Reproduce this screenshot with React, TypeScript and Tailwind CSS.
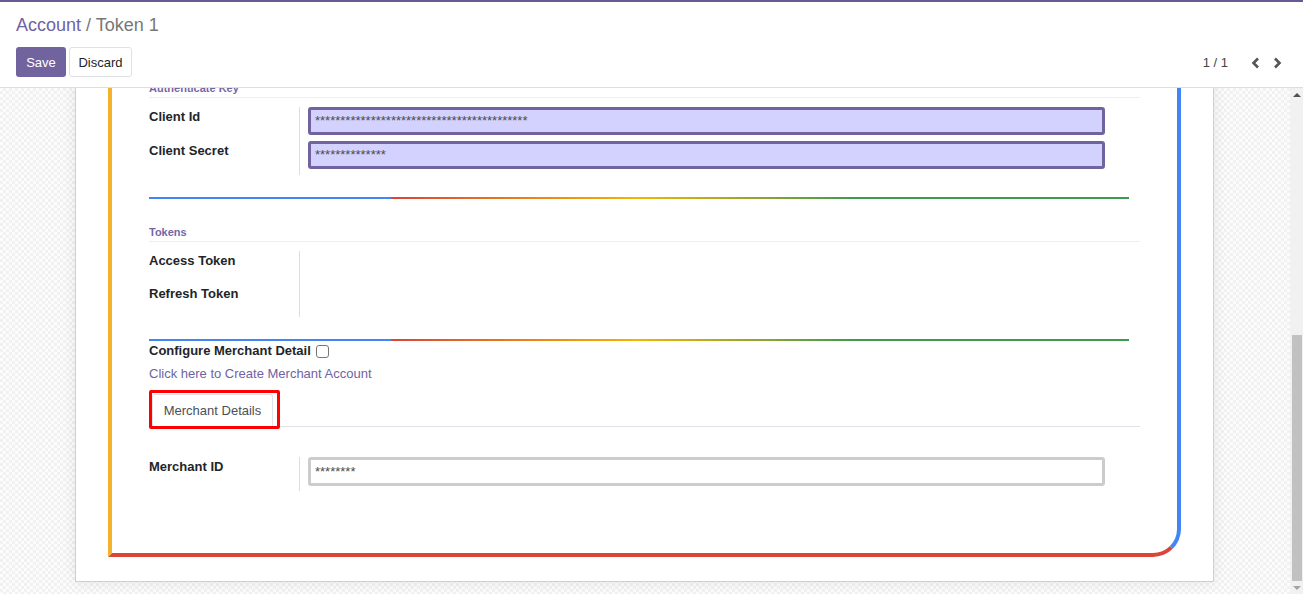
import { ReactNode } from "react";

function Chevron({ dir }: { dir: "left" | "right" }) {
  return (
    <svg width="10" height="12" viewBox="0 0 10 12" className="text-[#555]">
      <polyline
        points={dir === "left" ? "7,1.5 2.5,6 7,10.5" : "3,1.5 7.5,6 3,10.5"}
        fill="none"
        stroke="currentColor"
        strokeWidth="2.6"
      />
    </svg>
  );
}

function SeparatorTitle({ children, className = "" }: { children: ReactNode; className?: string }) {
  return (
    <div className={`h-[19px] border-b border-[#eeeeee] text-[11px] font-bold leading-[18px] text-[#7467a8] ${className}`}>
      {children}
    </div>
  );
}

function RainbowLine({ className = "" }: { className?: string }) {
  return (
    <div
      className={`h-[2px] w-[980px] bg-[image:linear-gradient(to_right,#4285f4_24.7%,#db4437_24.7%,#f4b400_50%,#3e9a4f_72%,#3e9a4f_100%)] ${className}`}
    />
  );
}

function Field({
  label,
  rowHeight,
  children,
}: {
  label: string;
  rowHeight: string;
  children?: ReactNode;
}) {
  return (
    <div className={`flex ${rowHeight}`}>
      <div className="w-[150px] shrink-0 text-[13px] font-bold leading-[19.5px] text-[#212529]">{label}</div>
      <div className="border-l border-[#dddddd] pl-2">{children}</div>
    </div>
  );
}

function SecretInput({ value }: { value: string }) {
  return (
    <div className="flex h-[28px] w-[797px] items-center rounded-[3px] border-[3px] border-[#71649e] bg-[#d3d1fd] px-1 text-[13px] text-[#4c4c4c]">
      {value}
    </div>
  );
}

export default function App() {
  return (
    <div className="flex h-[594px] w-[1303px] flex-col overflow-hidden bg-white font-['Liberation_Sans',Arial,sans-serif]">
      {/* control panel */}
      <div className="shrink-0 border-t-2 border-b border-t-[#6a5a93] border-b-[#dddddd] px-4 pb-[10px] pt-[11px]">
        <div className="h-[24px] text-[18px] leading-[24px]">
          <span className="text-[#6f62a3]">Account</span>
          <span className="text-[#777777]"> / Token 1</span>
        </div>
        <div className="mt-[10px] flex h-[30px] items-center">
          <button className="flex h-[30px] w-[50px] items-center justify-center rounded-[3px] bg-[#71639e] pt-px text-[13px] text-white">
            Save
          </button>
          <button className="ml-[3px] flex h-[30px] w-[63px] items-center justify-center rounded-[3px] border border-[#dee2e6] bg-white pt-px text-[13px] text-[#212529]">
            Discard
          </button>
          <div className="ml-auto mr-[5px] flex items-center pt-px">
            <span className="text-[13px] text-[#444444]">1 / 1</span>
            <div className="ml-[23px] flex items-center gap-[11px]">
              <Chevron dir="left" />
              <Chevron dir="right" />
            </div>
          </div>
        </div>
      </div>

      {/* body */}
      <div className="flex min-h-0 flex-1">
        <div className="min-w-0 flex-1 overflow-hidden bg-[image:repeating-conic-gradient(#f1f1f1_0_25%,#fcfcfc_0_50%)] bg-[length:6px_6px]">
          <div className="-mt-[10px] ml-[75px] w-[1139px] border border-[#cdcfd6] bg-white px-8 pb-[24px] shadow-[0_0_14px_rgba(0,0,0,0.08)]">
            <div className="rounded-br-[28px] border-r-4 border-b-4 border-l-4 border-r-[#4285f4] border-b-[#db4437] border-l-[#f4b12c] px-[37px] pb-[62px]">
              <SeparatorTitle>Authenticate Key</SeparatorTitle>
              <div className="mt-[9px]">
                <Field label="Client Id" rowHeight="h-[34px]">
                  <SecretInput value={"*".repeat(42)} />
                </Field>
                <Field label="Client Secret" rowHeight="h-[34px]">
                  <SecretInput value={"*".repeat(14)} />
                </Field>
              </div>

              <RainbowLine className="mt-[22px]" />

              <SeparatorTitle className="mt-[24px]">Tokens</SeparatorTitle>
              <div className="mt-[9px]">
                <Field label="Access Token" rowHeight="h-[33px]" />
                <Field label="Refresh Token" rowHeight="h-[33px]" />
              </div>

              <RainbowLine className="mt-[22px]" />

              <div className="flex h-[23px] items-start text-[13px] font-bold leading-[19px] text-[#212529]">
                Configure Merchant Detail
                <span className="ml-[5px] mt-[4px] inline-block h-[13px] w-[13px] rounded-[3px] border border-[#767676] bg-white" />
              </div>
              <div className="h-[20px] text-[13px] leading-[20px] text-[#6f62a3]">Click here to Create Merchant Account</div>

              <div className="relative mt-[10px] flex border-b border-[#dee2e6] pl-[3px]">
                <div className="-mb-px flex h-[33px] w-[121px] items-center justify-center rounded-t-[3px] border border-[#dee2e6] border-b-white bg-white text-[13px] text-[#495057]">
                  Merchant Details
                </div>
                <div className="absolute -top-[4px] left-0 h-[39px] w-[131px] rounded-[2px] border-[3px] border-[#ff0000]" />
              </div>

              <div className="mt-[30px]">
                <Field label="Merchant ID" rowHeight="h-[34px]">
                  <div className="flex h-[29px] w-[797px] items-center rounded-[3px] border-[3px] border-[#cccccc] bg-white px-1 text-[13px] text-[#4c4c4c]">
                    ********
                  </div>
                </Field>
              </div>
            </div>
          </div>
        </div>

        {/* scrollbar */}
        <div className="flex w-[13px] shrink-0 flex-col bg-[#f1f1f1]">
          <div className="flex h-[13px] items-center justify-center">
            <div className="h-0 w-0 border-x-[4px] border-b-[4px] border-x-transparent border-b-[#505050]" />
          </div>
          <div className="flex flex-1 flex-col justify-end">
            <div className="ml-[2px] h-[246px] w-[10px] bg-[#c1c1c1]" />
          </div>
          <div className="flex h-[13px] items-center justify-center">
            <div className="h-0 w-0 border-x-[4px] border-t-[4px] border-x-transparent border-t-[#a3a3a3]" />
          </div>
        </div>
      </div>
    </div>
  );
}
